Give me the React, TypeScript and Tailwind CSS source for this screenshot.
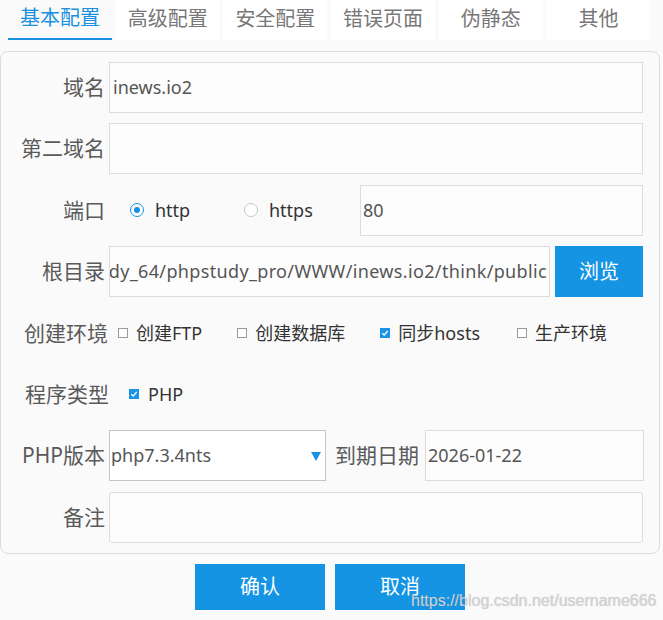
import React from "react";

const font = { fontFamily: '"Noto Sans", "Noto Sans CJK SC", sans-serif' };

function Label({ children, w = "w-[104px]" }: { children: React.ReactNode; w?: string }) {
  return (
    <div className={`${w} shrink-0 text-right text-[21px] leading-none text-[#5a5a5a]`}>{children}</div>
  );
}

function Box({ checked }: { checked?: boolean }) {
  return checked ? (
    <span className="w-[10px] h-[10px] bg-[#1a94e4] flex items-center justify-center shrink-0">
      <svg width="8" height="8" viewBox="0 0 8 8">
        <path d="M1.3 4.2 L3.2 6 L6.7 2" stroke="white" strokeWidth="1.3" fill="none" />
      </svg>
    </span>
  ) : (
    <span className="block w-[10px] h-[10px] border border-[#9a9a9a] bg-white shrink-0" />
  );
}

export default function App() {
  const tabs = ["基本配置", "高级配置", "安全配置", "错误页面", "伪静态", "其他"];
  return (
    <div className="relative w-[663px] h-[620px] bg-[#fafafa] overflow-hidden" style={font}>
      <div className="flex gap-[3.7px] pl-[8px] h-[40px]">
        {tabs.map((t, i) => (
          <div
            key={t}
            className={`w-[104px] h-[40px] flex items-center justify-center text-[20px] ${
              i === 0 ? "text-[#1a90e0] border-b-2 border-[#1a90e0]" : "text-[#777] bg-white"
            }`}
          >
            <span className="-mt-[2px]">{t}</span>
          </div>
        ))}
      </div>

      <div className="mt-[11px] w-[660px] border border-[#dcdcdc] rounded-[8px] pt-[10px] pb-[10px] flex flex-col gap-[10.4px]">
        <div className="flex items-center h-[51px]">
          <Label>域名</Label>
          <div className="ml-[4px] w-[534px] h-[51px] border border-[#dcdcdc] bg-[#fdfdfd] flex items-center pl-[3px] text-[18px] text-[#555]">
            inews.io2
          </div>
        </div>
        <div className="flex items-center h-[51px]">
          <Label>第二域名</Label>
          <div className="ml-[4px] w-[534px] h-[51px] border border-[#dcdcdc] bg-[#fdfdfd]" />
        </div>
        <div className="flex items-center h-[51px]">
          <Label>端口</Label>
          <div className="ml-[25px] flex items-center gap-[11px] w-[101px]">
            <span className="w-[14px] h-[14px] rounded-full border border-[#1a90e0] flex items-center justify-center bg-white">
              <span className="w-[6px] h-[6px] rounded-full bg-[#1a90e0]" />
            </span>
            <span className="text-[18px] text-[#333]">http</span>
          </div>
          <div className="ml-[13px] flex items-center gap-[11px] w-[101px]">
            <span className="w-[14px] h-[14px] rounded-full border border-[#c8c8c8] bg-white" />
            <span className="text-[18px] text-[#333]">https</span>
          </div>
          <div className="ml-[15px] w-[283px] h-[51px] border border-[#dcdcdc] bg-[#fdfdfd] flex items-center pl-[2px] text-[18px] text-[#555]">
            80
          </div>
        </div>
        <div className="flex items-center h-[51px]">
          <Label>根目录</Label>
          <div className="ml-[4px] w-[441px] h-[51px] border border-[#dcdcdc] bg-[#fdfdfd] flex items-center justify-end pr-[2px] overflow-hidden text-[18px] tracking-[0.35px] text-[#555] whitespace-nowrap">
            <span>dy_64/phpstudy_pro/WWW/inews.io2/think/public</span>
          </div>
          <div className="ml-[5px] w-[88px] h-[51px] bg-[#1594e4] text-white text-[20px] flex items-center justify-center">
            浏览
          </div>
        </div>
        <div className="flex items-center h-[51px]">
          <Label w="w-[107px]">创建环境</Label>
          <div className="ml-[10px] flex items-center text-[18px] text-[#333]">
            <Box />
            <span className="ml-[8px]">创建FTP</span>
            <span className="ml-[35px]"><Box /></span>
            <span className="ml-[8px]">创建数据库</span>
            <span className="ml-[35px]"><Box checked /></span>
            <span className="ml-[8px]">同步hosts</span>
            <span className="ml-[37px]"><Box /></span>
            <span className="ml-[8px]">生产环境</span>
          </div>
        </div>
        <div className="flex items-center h-[51px]">
          <Label w="w-[108px]">程序类型</Label>
          <div className="ml-[20px] flex items-center text-[18px] text-[#333]">
            <Box checked />
            <span className="ml-[9px]">PHP</span>
          </div>
        </div>
        <div className="flex items-center h-[51px]">
          <Label>PHP版本</Label>
          <div className="ml-[4px] w-[217px] h-[51px] border border-[#c4c4c4] bg-white flex items-center pl-[1px] pr-[4px] text-[18px] text-[#555]">
            <span className="flex-1">php7.3.4nts</span>
            <svg width="10" height="10" viewBox="0 0 10 10">
              <path d="M0 1 L10 1 L5 10 Z" fill="#1a90e0" />
            </svg>
          </div>
          <div className="ml-[9px] text-[21px] leading-none text-[#5a5a5a] w-[88px]">到期日期</div>
          <div className="ml-[2px] w-[219px] h-[51px] border border-[#dcdcdc] bg-[#fdfdfd] flex items-center pl-[2px] text-[18px] text-[#555]">
            2026-01-22
          </div>
        </div>
        <div className="flex items-center h-[51px]">
          <Label>备注</Label>
          <div className="ml-[4px] w-[534px] h-[51px] border border-[#dcdcdc] bg-[#fdfdfd] rounded-[3px]" />
        </div>
      </div>

      <div className="mt-[10px] flex justify-center gap-[10px] w-[660px]">
        <div className="w-[130px] h-[46px] bg-[#1594e4] text-white text-[20px] flex items-center justify-center">确认</div>
        <div className="w-[130px] h-[46px] bg-[#1594e4] text-white text-[20px] flex items-center justify-center">取消</div>
      </div>

      <div
        className="absolute left-[411px] top-[593px] text-[16px] leading-none text-[#d2d2d2]"
        style={{ fontFamily: '"Liberation Sans", sans-serif', textShadow: "0 0 1px rgba(120,120,120,0.35)" }}
      >
        https://blog.csdn.net/username666
      </div>
    </div>
  );
}
